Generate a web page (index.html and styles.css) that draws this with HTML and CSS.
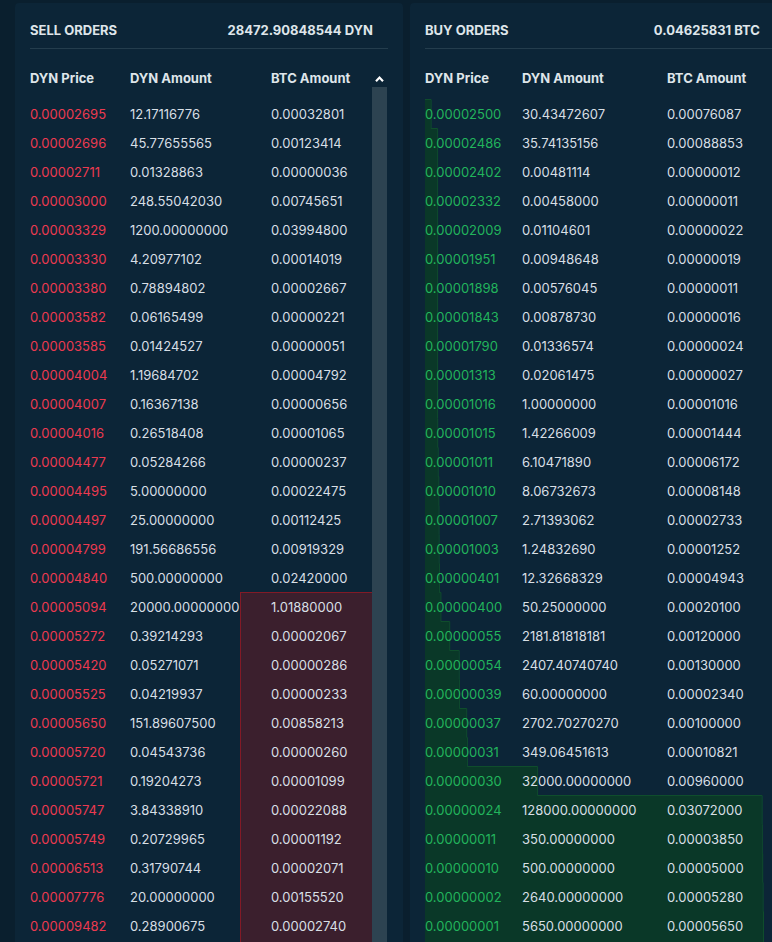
FILE: index.html
```html
<!DOCTYPE html>
<html>
<head>
<meta charset="utf-8">
<link rel="stylesheet" href="styles.css">
</head>
<body>
<section class="panel panel-sell">
  <header class="panel-head">
    <span>SELL ORDERS</span>
    <span>28472.90848544 DYN</span>
  </header>
  <div class="panel-body">
    <div class="table">
      <div class="row col-head"><span>DYN Price</span><span>DYN Amount</span><span>BTC Amount</span></div>
      <div class="rows">
        <div class="depth-sell"></div>
        <div class="row"><span class="ask">0.00002695</span><span>12.17116776</span><span>0.00032801</span></div>
        <div class="row"><span class="ask">0.00002696</span><span>45.77655565</span><span>0.00123414</span></div>
        <div class="row"><span class="ask">0.00002711</span><span>0.01328863</span><span>0.00000036</span></div>
        <div class="row"><span class="ask">0.00003000</span><span>248.55042030</span><span>0.00745651</span></div>
        <div class="row"><span class="ask">0.00003329</span><span>1200.00000000</span><span>0.03994800</span></div>
        <div class="row"><span class="ask">0.00003330</span><span>4.20977102</span><span>0.00014019</span></div>
        <div class="row"><span class="ask">0.00003380</span><span>0.78894802</span><span>0.00002667</span></div>
        <div class="row"><span class="ask">0.00003582</span><span>0.06165499</span><span>0.00000221</span></div>
        <div class="row"><span class="ask">0.00003585</span><span>0.01424527</span><span>0.00000051</span></div>
        <div class="row"><span class="ask">0.00004004</span><span>1.19684702</span><span>0.00004792</span></div>
        <div class="row"><span class="ask">0.00004007</span><span>0.16367138</span><span>0.00000656</span></div>
        <div class="row"><span class="ask">0.00004016</span><span>0.26518408</span><span>0.00001065</span></div>
        <div class="row"><span class="ask">0.00004477</span><span>0.05284266</span><span>0.00000237</span></div>
        <div class="row"><span class="ask">0.00004495</span><span>5.00000000</span><span>0.00022475</span></div>
        <div class="row"><span class="ask">0.00004497</span><span>25.00000000</span><span>0.00112425</span></div>
        <div class="row"><span class="ask">0.00004799</span><span>191.56686556</span><span>0.00919329</span></div>
        <div class="row"><span class="ask">0.00004840</span><span>500.00000000</span><span>0.02420000</span></div>
        <div class="row"><span class="ask">0.00005094</span><span>20000.00000000</span><span>1.01880000</span></div>
        <div class="row"><span class="ask">0.00005272</span><span>0.39214293</span><span>0.00002067</span></div>
        <div class="row"><span class="ask">0.00005420</span><span>0.05271071</span><span>0.00000286</span></div>
        <div class="row"><span class="ask">0.00005525</span><span>0.04219937</span><span>0.00000233</span></div>
        <div class="row"><span class="ask">0.00005650</span><span>151.89607500</span><span>0.00858213</span></div>
        <div class="row"><span class="ask">0.00005720</span><span>0.04543736</span><span>0.00000260</span></div>
        <div class="row"><span class="ask">0.00005721</span><span>0.19204273</span><span>0.00001099</span></div>
        <div class="row"><span class="ask">0.00005747</span><span>3.84338910</span><span>0.00022088</span></div>
        <div class="row"><span class="ask">0.00005749</span><span>0.20729965</span><span>0.00001192</span></div>
        <div class="row"><span class="ask">0.00006513</span><span>0.31790744</span><span>0.00002071</span></div>
        <div class="row"><span class="ask">0.00007776</span><span>20.00000000</span><span>0.00155520</span></div>
        <div class="row"><span class="ask">0.00009482</span><span>0.28900675</span><span>0.00002740</span></div>
      </div>
    </div>
    <div class="scrollbar">
      <div class="scroll-btn">
        <svg width="9" height="6" viewBox="0 0 9 6"><polyline points="1,5.2 4.5,1.6 8,5.2" fill="none" stroke="#ffffff" stroke-width="2.2"/></svg>
      </div>
      <div class="scroll-thumb"></div>
    </div>
  </div>
</section>

<section class="panel panel-buy">
  <header class="panel-head">
    <span>BUY ORDERS</span>
    <span>0.04625831 BTC</span>
  </header>
  <div class="panel-body">
    <div class="table">
      <div class="row col-head"><span>DYN Price</span><span>DYN Amount</span><span>BTC Amount</span></div>
      <div class="rows">
        <svg class="depth-buy" width="340" height="880" viewBox="0 0 340 880">
          <path d="M0 0H5.6V29H12.1V319H12.2V348H12.7V377H13.3V406H13.5V435H13.6V464H13.9V493H15.4V522H24.2V551H33.7V580H33.9V609H41.2V638H41.9V667H112.1V696H336.6V725H336.8V754H337.2V783H337.6V812H338V880H0Z" fill="#0a3828"/>
          <path d="M0 0.5H6.1V29.5H12.6V319.5H12.7V348.5H13.2V377.5H13.8V406.5H14V435.5H14.1V464.5H14.4V493.5H15.9V522.5H24.7V551.5H34.2V580.5H34.4V609.5H41.7V638.5H42.4V667.5H112.6V696.5H337.1V725.5H337.3V754.5H337.7V783.5H338.1V812.5H338.5V880" fill="none" stroke="#0f4d2c" stroke-width="1"/>
        </svg>
        <div class="row"><span class="bid">0.00002500</span><span>30.43472607</span><span>0.00076087</span></div>
        <div class="row"><span class="bid">0.00002486</span><span>35.74135156</span><span>0.00088853</span></div>
        <div class="row"><span class="bid">0.00002402</span><span>0.00481114</span><span>0.00000012</span></div>
        <div class="row"><span class="bid">0.00002332</span><span>0.00458000</span><span>0.00000011</span></div>
        <div class="row"><span class="bid">0.00002009</span><span>0.01104601</span><span>0.00000022</span></div>
        <div class="row"><span class="bid">0.00001951</span><span>0.00948648</span><span>0.00000019</span></div>
        <div class="row"><span class="bid">0.00001898</span><span>0.00576045</span><span>0.00000011</span></div>
        <div class="row"><span class="bid">0.00001843</span><span>0.00878730</span><span>0.00000016</span></div>
        <div class="row"><span class="bid">0.00001790</span><span>0.01336574</span><span>0.00000024</span></div>
        <div class="row"><span class="bid">0.00001313</span><span>0.02061475</span><span>0.00000027</span></div>
        <div class="row"><span class="bid">0.00001016</span><span>1.00000000</span><span>0.00001016</span></div>
        <div class="row"><span class="bid">0.00001015</span><span>1.42266009</span><span>0.00001444</span></div>
        <div class="row"><span class="bid">0.00001011</span><span>6.10471890</span><span>0.00006172</span></div>
        <div class="row"><span class="bid">0.00001010</span><span>8.06732673</span><span>0.00008148</span></div>
        <div class="row"><span class="bid">0.00001007</span><span>2.71393062</span><span>0.00002733</span></div>
        <div class="row"><span class="bid">0.00001003</span><span>1.24832690</span><span>0.00001252</span></div>
        <div class="row"><span class="bid">0.00000401</span><span>12.32668329</span><span>0.00004943</span></div>
        <div class="row"><span class="bid">0.00000400</span><span>50.25000000</span><span>0.00020100</span></div>
        <div class="row"><span class="bid">0.00000055</span><span>2181.81818181</span><span>0.00120000</span></div>
        <div class="row"><span class="bid">0.00000054</span><span>2407.40740740</span><span>0.00130000</span></div>
        <div class="row"><span class="bid">0.00000039</span><span>60.00000000</span><span>0.00002340</span></div>
        <div class="row"><span class="bid">0.00000037</span><span>2702.70270270</span><span>0.00100000</span></div>
        <div class="row"><span class="bid">0.00000031</span><span>349.06451613</span><span>0.00010821</span></div>
        <div class="row"><span class="bid">0.00000030</span><span>32000.00000000</span><span>0.00960000</span></div>
        <div class="row"><span class="bid">0.00000024</span><span>128000.00000000</span><span>0.03072000</span></div>
        <div class="row"><span class="bid">0.00000011</span><span>350.00000000</span><span>0.00003850</span></div>
        <div class="row"><span class="bid">0.00000010</span><span>500.00000000</span><span>0.00005000</span></div>
        <div class="row"><span class="bid">0.00000002</span><span>2640.00000000</span><span>0.00005280</span></div>
        <div class="row"><span class="bid">0.00000001</span><span>5650.00000000</span><span>0.00005650</span></div>
      </div>
    </div>
    <div class="scrollbar"></div>
  </div>
</section>
</body>
</html>
```

FILE: styles.css
```css
html, body {
  margin: 0;
  padding: 0;
}
body {
  background: #0a1f2e;
  font-family: Inter, "Noto Sans", sans-serif;
  font-size: 13px;
  color: #d8dfe5;
  height: 942px;
  overflow: hidden;
  display: flex;
  align-items: flex-start;
  gap: 7px;
  padding: 3px 0 0 15px;
  box-sizing: border-box;
}
.panel {
  background: #0c2537;
  border-radius: 4px;
  height: 980px;
  flex: none;
  box-sizing: border-box;
  padding: 0 15px;
  overflow: hidden;
}
.panel-sell { width: 388px; }
.panel-buy { width: 384px; }
.panel-head {
  display: flex;
  justify-content: space-between;
  padding: 18px 15px 9px 0;
  line-height: 18px;
  font-weight: 700;
  font-size: 13px;
  color: #dfe5ea;
  border-bottom: 1px solid #243d4d;
}
.panel-buy .panel-head { padding-right: 19px; }
.panel-body {
  display: flex;
  align-items: stretch;
}
.table {
  width: 342px;
  flex: none;
}
.panel-buy .table { width: 338px; }
.row {
  display: grid;
  grid-template-columns: 100px 141px 1fr;
  height: 29px;
  box-sizing: border-box;
  padding-top: 1px;
  line-height: 29px;
  white-space: nowrap;
  position: relative;
  z-index: 1;
}
.panel-buy .row { grid-template-columns: 97px 145px 1fr; }
.row.col-head {
  height: 50px;
  line-height: 18px;
  padding-top: 20px;
  font-weight: 700;
  color: #dfe5ea;
}
.rows {
  position: relative;
}
.ask { color: #ec3a50; }
.bid { color: #22b45c; }
.depth-sell {
  position: absolute;
  top: 493px;
  right: 0;
  width: 131px;
  height: 420px;
  background: #3b1f2d;
  border-left: 1px solid #821a26;
  border-top: 1px solid #821a26;
  z-index: 0;
}
.depth-buy {
  position: absolute;
  top: 0;
  left: 0;
  z-index: 0;
  display: block;
}
.scrollbar {
  width: 16px;
  flex: none;
  display: flex;
  flex-direction: column;
}
.scroll-btn {
  height: 38px;
  box-sizing: border-box;
  padding: 27px 0 0 3px;
}
.scroll-btn svg { display: block; }
.scroll-thumb {
  width: 15px;
  height: 860px;
  background: #2d4351;
}
```
